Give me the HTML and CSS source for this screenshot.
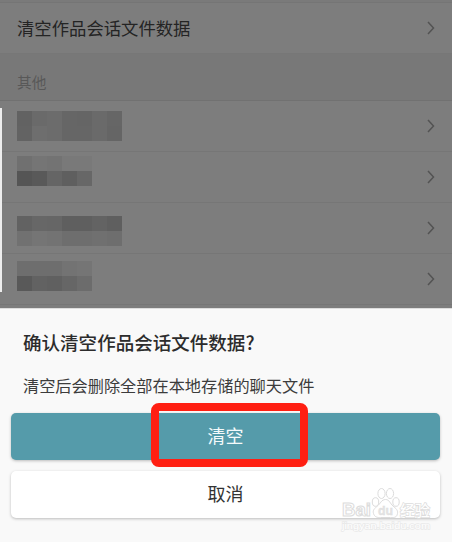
FILE: index.html
```html
<!DOCTYPE html>
<html lang="zh-CN">
<head>
  <meta charset="UTF-8" />
  <title>清空作品会话文件数据</title>
  <meta name="viewport" content="width=device-width, initial-scale=1.0" />
  <link rel="stylesheet" href="styles.css">
</head>
<body>
  <div class="screen">
    <div class="settings">
      <div class="row first">
        <span>清空作品会话文件数据</span>
        <svg class="arrow" viewBox="0 0 8 14"><path d="M1 1l5.5 6L1 13" /></svg>
      </div>
      <div class="section">其他</div>
      <div class="row">
        <div class="mosaic long m1">
          <i class="c62"></i><i class="c6a"></i><i class="c6c"></i><i class="c66"></i><i class="c65"></i><i class="c6a"></i><i class="c66"></i>
          <i class="c63"></i><i class="c6e"></i><i class="c6c"></i><i class="c66"></i><i class="c66"></i><i class="c6a"></i><i class="c65"></i>
        </div>
        <svg class="arrow" viewBox="0 0 8 14"><path d="M1 1l5.5 6L1 13" /></svg>
      </div>
      <div class="row">
        <div class="mosaic m2">
          <i class="c70"></i><i class="c75"></i><i class="c73"></i><i class="c79"></i><i class="c79"></i>
          <i class="c55"></i><i class="c59"></i><i class="c65"></i><i class="c5f"></i><i class="c67"></i>
        </div>
        <svg class="arrow" viewBox="0 0 8 14"><path d="M1 1l5.5 6L1 13" /></svg>
      </div>
      <div class="row">
        <div class="mosaic long m3">
          <i class="c62"></i><i class="c67"></i><i class="c66"></i><i class="c5f"></i><i class="c5f"></i><i class="c63"></i><i class="c5f"></i>
          <i class="c71"></i><i class="c75"></i><i class="c73"></i><i class="c6e"></i><i class="c6e"></i><i class="c70"></i><i class="c6e"></i>
        </div>
        <svg class="arrow" viewBox="0 0 8 14"><path d="M1 1l5.5 6L1 13" /></svg>
      </div>
      <div class="row">
        <div class="mosaic m4">
          <i class="c6e"></i><i class="c6e"></i><i class="c6e"></i><i class="c73"></i><i class="c75"></i>
          <i class="c59"></i><i class="c62"></i><i class="c60"></i><i class="c66"></i><i class="c6c"></i>
        </div>
        <svg class="arrow" viewBox="0 0 8 14"><path d="M1 1l5.5 6L1 13" /></svg>
      </div>
      <div class="edge"></div>
    </div>

    <div class="sheet">
      <h2>确认清空作品会话文件数据?</h2>
      <p>清空后会删除全部在本地存储的聊天文件</p>
      <button class="btn primary">清空<span class="marker"></span></button>
      <button class="btn">取消</button>
      <svg class="watermark" viewBox="0 0 96 48">
        <g class="logo">
          <text x="3" y="31" textLength="29" lengthAdjust="spacingAndGlyphs">Bai</text>
          <ellipse cx="36.5" cy="17" rx="3.2" ry="4.3" />
          <ellipse cx="42.500" cy="8.500" rx="3.6" ry="5" />
          <ellipse cx="51" cy="8.500" rx="3.6" ry="5" />
          <ellipse cx="57" cy="17" rx="3.2" ry="4.3" />
          <path d="M46.500 14.500c-4 0-5 4-8 6.500s-5 4-4 7.500 4 4.300 7 4h10c4 .6 6.500-.5 7-4s-1.500-5-4.500-7.500-3.500-6.500-7.500-6.500z" />
          <text class="du" x="39" y="30" textLength="15" lengthAdjust="spacingAndGlyphs">du</text>
          <text class="cn" x="61" y="31" textLength="30" lengthAdjust="spacingAndGlyphs">经验</text>
        </g>
        <text class="url" x="3" y="43.500" textLength="88" lengthAdjust="spacingAndGlyphs">jingyan.baidu.com</text>
      </svg>
    </div>
  </div>
</body>
</html>
```

FILE: styles.css
```css
* {
  box-sizing: border-box;
}

body {
  margin: 0;
  background: #fff;
  font-family: "Noto Sans CJK SC", sans-serif;
  overflow: hidden;
}

.screen {
  width: 452px;
  height: 542px;
  display: flex;
  flex-direction: column;
}

.settings {
  position: relative;
  height: 308px;
  background: #7d7d7d;
  border-top: 2px solid #7a7a7a;
  overflow: hidden;
}

.row {
  display: flex;
  justify-content: space-between;
  align-items: flex-start;
  height: 51px;
  padding: 0 17px;
  border-bottom: 1px solid #767676;
}

.row.first {
  border-top: 1px solid #757575;
  border-bottom-color: #777;
  height: 52px;
  font-size: 17.35px;
  line-height: 50px;
  color: #242424;
}

.section {
  height: 47px;
  padding: 5px 17px 0;
  background: #787878;
  border-bottom: 1px solid #717171;
  font-size: 14.7px;
  line-height: 46px;
  color: #585858;
}

.arrow {
  width: 8px;
  height: 14px;
  margin-top: 18px;
  fill: none;
  stroke: #535353;
  stroke-width: 1.5;
}

/* pixelated labels */
.mosaic {
  display: grid;
  grid-template-columns: repeat(5, 15px);
  grid-auto-rows: 15px;
}

.mosaic.long {
  grid-template-columns: repeat(7, 15px);
}

.m1 { margin-top: 10px; }
.m2 { margin-top: 4px; }
.m3 { margin-top: 13px; }
.m4 { margin-top: 7px; }

.c55 { background: #555; }
.c59 { background: #595959; }
.c5f { background: #5f5f5f; }
.c60 { background: #606060; }
.c62 { background: #626262; }
.c63 { background: #636363; }
.c65 { background: #656565; }
.c66 { background: #666; }
.c67 { background: #676767; }
.c6a { background: #6a6a6a; }
.c6c { background: #6c6c6c; }
.c6e { background: #6e6e6e; }
.c70 { background: #707070; }
.c71 { background: #717171; }
.c73 { background: #737373; }
.c75 { background: #757575; }
.c79 { background: #797979; }

.edge {
  position: absolute;
  left: 0;
  top: 106px;
  width: 2px;
  height: 184px;
  background: #ededed;
}

.sheet {
  position: relative;
  flex: 1;
  padding: 0 11px;
  background: #f9f9f9;
  border-top: 1px solid #ddd;
}

h2 {
  margin: 19px 12px 0;
  font-size: 18.55px;
  font-weight: 500;
  line-height: 28px;
  color: #2c2c2c;
}

p {
  margin: 17px 12px 16px;
  font-size: 16.2px;
  line-height: 24px;
  color: #3c3c3c;
}

.btn {
  position: relative;
  display: block;
  width: 429px;
  height: 47px;
  margin: 0 0 11px;
  padding: 0 0 2px;
  border: none;
  border-radius: 5px;
  background: #fff;
  box-shadow: 0 1px 3px rgba(0, 0, 0, 0.25);
  font-family: inherit;
  font-size: 18px;
  line-height: 45px;
  color: #333;
}

.btn.primary {
  background: #559baa;
  color: #f4fafb;
}

.marker {
  position: absolute;
  left: 140px;
  top: -10px;
  width: 157px;
  height: 64px;
  border: 8px solid #ff1f12;
  border-radius: 8px;
}

.watermark {
  position: absolute;
  left: 339px;
  top: 176px;
  width: 96px;
  height: 48px;
  fill: #fff;
  stroke: #dcdcdc;
  stroke-width: 1;
  font-family: "Liberation Sans", sans-serif;
}

.logo {
  font-size: 18px;
  font-weight: bold;
}

.watermark .du {
  font-size: 12px;
  fill: #e4e4e4;
  stroke: #dedede;
  stroke-width: 0.4;
}

.watermark .cn {
  font-family: "Noto Sans CJK SC", sans-serif;
  font-size: 15px;
  font-weight: 500;
  stroke-width: 1.4;
  paint-order: stroke;
}

.watermark .url {
  font-size: 9.5px;
  stroke: #e9e9e9;
  stroke-width: 1.4;
  paint-order: stroke;
}
```
